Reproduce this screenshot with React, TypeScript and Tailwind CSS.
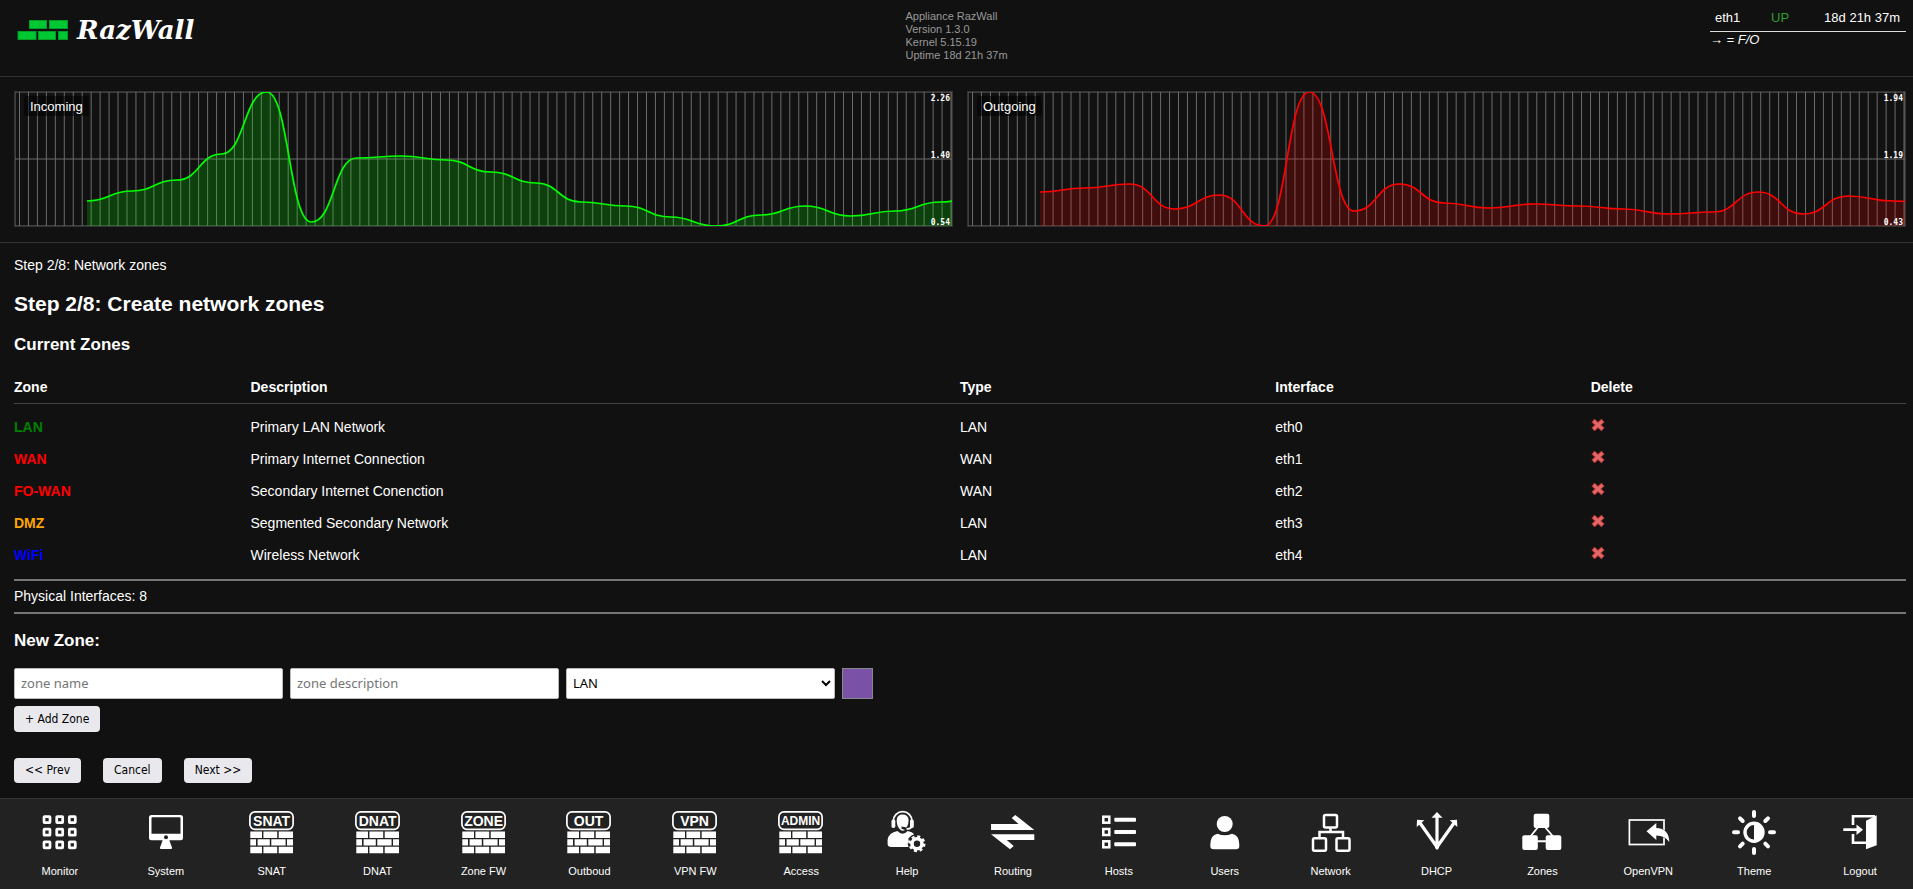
import React, { useState } from "react";

const INCOMING = [201, 191, 180, 154, 92, 222, 158, 156, 160, 172, 183, 202, 206, 217, 226, 215, 206, 216, 211, 202, 196];
const OUTGOING = [192, 188, 184, 209, 195, 226, 92, 211, 184, 203, 208, 204, 206, 209, 214, 212, 192, 214, 196, 201, 203];

const ZONES = [
  { name: "LAN", color: "text-[#008000]", description: "Primary LAN Network", type: "LAN", iface: "eth0" },
  { name: "WAN", color: "text-[#ff0000]", description: "Primary Internet Connection", type: "WAN", iface: "eth1" },
  { name: "FO-WAN", color: "text-[#ff0000]", description: "Secondary Internet Conenction", type: "WAN", iface: "eth2" },
  { name: "DMZ", color: "text-[#ffa500]", description: "Segmented Secondary Network", type: "LAN", iface: "eth3" },
  { name: "WiFi", color: "text-[#0000ff]", description: "Wireless Network", type: "LAN", iface: "eth4" },
];

// Horizontal-tangent bezier through evenly spaced samples
function smoothPath(values: number[]) {
  const step = 44.9;
  let d = `M72 ${values[0] - 92}`;
  for (let i = 1; i < values.length; i++) {
    const x0 = 72 + step * (i - 1);
    const x1 = x0 + step;
    const mid = (x0 + x1) / 2;
    d += ` C${mid} ${values[i - 1] - 92} ${mid} ${values[i] - 92} ${x1} ${values[i] - 92}`;
  }
  return d;
}

type TrafficChartProps = {
  title: string;
  values: number[];
  stroke: string;
  fill: string;
  scale: [string, string, string];
};

function TrafficChart({ title, values, stroke, fill, scale }: TrafficChartProps) {
  const line = smoothPath(values);
  const grid = Array.from({ length: 105 }, (_, i) => 4.5 + i * 8.957);

  return (
    <div className="relative h-[136px] flex-1 border border-[#333] overflow-hidden">
      <svg className="block w-full h-full" viewBox="0 0 937 134" preserveAspectRatio="none" aria-label={`${title} traffic`}>
        <g stroke="#6c6c6c" strokeWidth="1">
          {grid.map((x) => (
            <path key={x} d={`M${x} 0V134`} />
          ))}
          <path d="M0 0H937M0 67H937M0 134H937M0 0V134M937 0V134" />
        </g>
        <path d={`${line} V134 H72 Z`} fill={fill} />
        <path d={line} fill="none" stroke={stroke} strokeWidth="1.7" />
      </svg>
      <span className="absolute left-[9px] top-1 h-5 px-[6px] rounded-[3px] bg-black/50 text-[13px] leading-[22px] text-white">
        {title}
      </span>
      <div className="absolute right-0.5 inset-y-0 text-right font-['DejaVu_Sans_Mono',monospace] font-bold text-[8px] leading-3 text-white">
        <div className="absolute right-0 top-px">{scale[0]}</div>
        <div className="absolute right-0 bottom-16">{scale[1]}</div>
        <div className="absolute right-0 -bottom-[3px]">{scale[2]}</div>
      </div>
    </div>
  );
}

function Logo() {
  return (
    <a href="#" className="flex items-center gap-2 text-white w-max">
      <svg width="52" height="22" viewBox="0 0 52 22" fill="#00c832" stroke="#009a27" strokeWidth="1">
        <rect x="12.5" y="1.5" width="17" height="8" />
        <rect x="32.5" y="1.5" width="18" height="8" />
        <rect x="1" y="12.5" width="18" height="8" />
        <rect x="21.5" y="12.5" width="17" height="8" />
        <rect x="41.5" y="12.5" width="9" height="8" />
      </svg>
      <span className="font-['DejaVu_Serif',serif] font-bold italic text-[26px] leading-[26px]">RazWall</span>
    </a>
  );
}

function WallIcon({ label, size = 15 }: { label: string; size?: number }) {
  return (
    <>
      <rect x="1.9" y="3.9" width="43.2" height="17.4" rx="5" fill="none" stroke="currentColor" strokeWidth="1.7" />
      <text
        x="23.6"
        y={size === 12 ? 17 : 18}
        textAnchor="middle"
        fontFamily="Liberation Sans, sans-serif"
        fontWeight="bold"
        fontSize={size}
      >
        {label}
      </text>
      <path d="M2.3 23.5H14V30H2.3ZM15.4 23.5H29.2V30H15.4ZM30.7 23.5H45V30H30.7ZM2.3 31.2H8V37.6H2.3ZM9.6 31.2H21.8V37.6H9.6ZM23.3 31.2H37.6V37.6H23.3ZM39 31.2H45V37.6H39ZM2.3 38.8H14V45.3H2.3ZM15.4 38.8H29.2V45.3H15.4ZM30.7 38.8H45V45.3H30.7Z" />
    </>
  );
}

const MonitorIcon = (
  <g fill="none" stroke="currentColor" strokeWidth="2.7">
    {[11.2, 23.8, 36.4].map((y) =>
      [11, 23.7, 36.3].map((x) => <rect key={`${x}-${y}`} x={x - 3} y={y - 2.6} width="6" height="6" rx="0.5" />)
    )}
  </g>
);

const SystemIcon = (
  <>
    <path fillRule="evenodd" d="M9.5 7H38.5Q41 7 41 9.5V29.8Q41 32.3 38.5 32.3H9.5Q7 32.3 7 29.8V9.5Q7 7 9.5 7ZM10.5 9.2Q9.5 9.2 9.5 10.2V25.8H38.5V10.2Q38.5 9.2 37.5 9.2Z" />
    <path d="M21.5 30H26.5L30 39.5Q30.3 41 29 41H19Q17.7 41 18 39.5Z" />
    <circle cx="24" cy="29.3" r="2" fill="#222" />
  </>
);

const HelpIcon = (
  <>
    <path d="M10.3 15.5V13A9.3 9.3 0 0 1 29 13V15.5" fill="none" stroke="currentColor" strokeWidth="1.8" />
    <path d="M13.7 12Q14 6.5 19.6 6.5T25.6 12Q25.8 17 23.6 19.5L18.5 18.5V20.7L22 22Q19.6 23.7 17.4 21.8 13.6 18.5 13.7 12Z" />
    <rect x="8.5" y="11.5" width="3.8" height="8.5" rx="1.7" />
    <rect x="27" y="11.5" width="3.8" height="8.5" rx="1.7" />
    <path d="M29 18.5Q27.5 21 23.5 21" fill="none" stroke="currentColor" strokeWidth="1.6" />
    <path d="M14.5 23Q19.5 28.5 24.7 23Q29.5 24 31.2 26.2L28.5 27.6 25.3 30.5 26 34 24.6 35.5 25.5 39H8.5Q4.6 39 4.6 36V32Q5.5 24.5 14.5 23Z" />
    <circle cx="34" cy="35.7" r="5" fill="none" stroke="currentColor" strokeWidth="3.6" />
    <circle cx="34" cy="35.7" r="7.3" fill="none" stroke="currentColor" strokeWidth="2.4" strokeDasharray="3 2.733" />
  </>
);

const RoutingIcon = (
  <path d="M2 16H29.5L22.7 10 26.3 7 45.3 22H2ZM45.3 32H17.8L24.7 38 21 41.3 2 26.3H45.3Z" />
);

const HostsIcon = (
  <>
    {[11.7, 24, 36.3].map((y) => (
      <g key={y}>
        <rect x="8.3" y={y - 3} width="6" height="6" fill="none" stroke="currentColor" strokeWidth="2.5" />
        <rect x="19.3" y={y - 2} width="21.7" height="4" rx="1" />
      </g>
    ))}
  </>
);

const UsersIcon = (
  <>
    <circle cx="23.7" cy="16" r="8" />
    <path d="M16.5 25.7Q23.7 28.8 31 25.7Q38.3 27 38.3 36.5V38Q38.3 41.3 35 41.3H12.6Q9.3 41.3 9.3 38V36.5Q9.3 27 16.5 25.7Z" />
  </>
);

const NetworkIcon = (
  <g fill="none" stroke="currentColor" strokeWidth="2.5">
    <rect x="17" y="7" width="13" height="12.5" rx="1.5" />
    <rect x="6" y="30.3" width="13" height="12.5" rx="1.5" />
    <rect x="29.5" y="30.3" width="13" height="12.5" rx="1.5" />
    <path d="M23.5 19.5V24M12.5 30V24H36V30" />
  </g>
);

const DhcpIcon = (
  <>
    <path d="M24 38V8M24 39L7 15M24 39L41 15" fill="none" stroke="currentColor" strokeWidth="3.2" />
    <path d="M24 4L29.5 9.8H18.5ZM4 11.7L11.3 12.3 3.7 19ZM44 11.7L36.7 12.3 44.3 19ZM22 35H26V40L24 42 22 40Z" />
  </>
);

const ZonesIcon = (
  <>
    <rect x="15.7" y="5.7" width="15.6" height="14.3" rx="2" />
    <rect x="4.3" y="27.3" width="15.5" height="14.7" rx="2" />
    <rect x="27.7" y="27.3" width="15.6" height="14.7" rx="2" />
    <path d="M20.5 18.5L12 29M26.5 18.5L35.5 29M19 33.2H28" stroke="currentColor" strokeWidth="1.9" />
  </>
);

const OpenVpnIcon = (
  <>
    <rect x="5.4" y="12" width="34.6" height="24.5" fill="none" stroke="currentColor" strokeWidth="1.7" />
    <path
      d="M22.5 23.3L32.3 15V20Q45 20.5 45.3 34Q41 27.5 32.3 27.5V32Z"
      stroke="#222"
      strokeWidth="1"
      paintOrder="stroke"
    />
  </>
);

const ThemeIcon = (
  <>
    <circle cx="24" cy="24.3" r="9" fill="none" stroke="currentColor" strokeWidth="3.4" />
    <path d="M24 16A8.3 8.3 0 0 1 24 32.6Z" />
    <path
      d="M24 4V8M24 41V45M4 24.3H8M40 24.3H44M10 10.3L12.7 13M35.3 35.6L38 38.3M38 10.3L35.3 13M12.7 35.6L10 38.3"
      stroke="currentColor"
      strokeWidth="4"
      strokeLinecap="round"
    />
  </>
);

const LogoutIcon = (
  <>
    <path d="M17 17V8.3H39M17 26V34.8H31" fill="none" stroke="currentColor" strokeWidth="2.6" />
    <path d="M30 12.7L40.7 7.3V37.3L30 41.3Z" />
    <path d="M7.3 20.3H20.5V16.5L27 21.7 20.5 27V23H7.3Z" />
  </>
);

const NAV = [
  { label: "Monitor", icon: MonitorIcon },
  { label: "System", icon: SystemIcon },
  { label: "SNAT", icon: <WallIcon label="SNAT" size={14} /> },
  { label: "DNAT", icon: <WallIcon label="DNAT" size={14} /> },
  { label: "Zone FW", icon: <WallIcon label="ZONE" size={14} /> },
  { label: "Outboud", icon: <WallIcon label="OUT" size={14} /> },
  { label: "VPN FW", icon: <WallIcon label="VPN" size={14} /> },
  { label: "Access", icon: <WallIcon label="ADMIN" size={12} /> },
  { label: "Help", icon: HelpIcon },
  { label: "Routing", icon: RoutingIcon },
  { label: "Hosts", icon: HostsIcon },
  { label: "Users", icon: UsersIcon },
  { label: "Network", icon: NetworkIcon },
  { label: "DHCP", icon: DhcpIcon },
  { label: "Zones", icon: ZonesIcon },
  { label: "OpenVPN", icon: OpenVpnIcon },
  { label: "Theme", icon: ThemeIcon },
  { label: "Logout", icon: LogoutIcon },
];

function DeleteIcon() {
  return (
    <svg width="14" height="14" viewBox="0 0 14 14" fill="none">
      <path d="M2 2.5L12 11.5M12 2.5L2 11.5" stroke="#c43c3c" strokeWidth="4.6" />
      <path d="M2.6 3L11.4 11M11.4 3L2.6 11" stroke="#e46a6a" strokeWidth="2.6" />
    </svg>
  );
}

const fieldClass =
  "w-[269px] h-[31px] px-1.5 bg-white border border-[#bbb] rounded-[2px] font-['Noto_Sans',sans-serif] text-[13px] text-black placeholder:text-[#757575]";
const buttonClass =
  "px-[11px] bg-[#e9e9ed] rounded-[4px] font-['DejaVu_Sans_Condensed','Noto_Sans',sans-serif] text-[12px] leading-4 text-black hover:bg-[#d0d0d7] cursor-pointer";

export default function App() {
  const [color, setColor] = useState("#7952a8");

  return (
    <div className="min-h-screen flex flex-col bg-[#111] text-white font-['Liberation_Sans',Arial,sans-serif] text-[14px] leading-5">
      <header className="grid grid-cols-[1fr_auto_1fr] h-[77px] border-b border-[#333]">
        <div className="pl-[17px] pt-[17px]">
          <Logo />
        </div>
        <div className="pt-2.5 text-[11px] leading-[13px] text-[#999]">
          <p>Appliance RazWall</p>
          <p>Version 1.3.0</p>
          <p>Kernel 5.15.19</p>
          <p>Uptime 18d 21h 37m</p>
        </div>
        <div className="justify-self-end pr-[7px] pt-[5px] text-[13px] leading-4">
          <table className="w-[196px]">
            <tbody>
              <tr className="h-[26px] border-b border-[#ddd]">
                <td className="w-[61px] pl-[5px]">eth1</td>
                <td className="text-[#2e9e2e]">UP</td>
                <td className="pr-1.5 text-right whitespace-nowrap">18d 21h 37m</td>
              </tr>
            </tbody>
          </table>
          <p className="italic">→ = F/O</p>
        </div>
      </header>

      <section className="flex gap-3.5 pl-3.5 pr-[7px] pt-3.5 pb-[15px] border-b border-[#333]">
        <TrafficChart title="Incoming" values={INCOMING} stroke="#00ff00" fill="rgba(0,255,0,0.2)" scale={["2.26", "1.40", "0.54"]} />
        <TrafficChart title="Outgoing" values={OUTGOING} stroke="#ff0000" fill="rgba(255,0,0,0.2)" scale={["1.94", "1.19", "0.43"]} />
      </section>

      <main className="pl-3.5 pr-[7px] pt-3 pb-[15px]">
        <p>Step 2/8: Network zones</p>
        <h2 className="mt-[15px] text-[21px] leading-7 font-bold">Step 2/8: Create network zones</h2>
        <h3 className="mt-[17px] text-[17px] leading-5 font-bold">Current Zones</h3>

        <table className="mt-4 w-full table-fixed text-left">
          <thead>
            <tr className="h-8 border-b border-[#444]">
              <th className="w-[12.5%]">Zone</th>
              <th className="w-[37.5%]">Description</th>
              <th>Type</th>
              <th>Interface</th>
              <th>Delete</th>
            </tr>
          </thead>
          <tbody className="leading-8 [&>tr:first-child>td]:pt-[7px]">
            {ZONES.map((zone) => (
              <tr key={zone.name}>
                <td className={`font-bold ${zone.color}`}>{zone.name}</td>
                <td>{zone.description}</td>
                <td>{zone.type}</td>
                <td>{zone.iface}</td>
                <td className="pb-1">
                  <button type="button" aria-label={`Delete ${zone.name}`} className="flex items-center h-7 cursor-pointer">
                    <DeleteIcon />
                  </button>
                </td>
              </tr>
            ))}
          </tbody>
        </table>

        <p className="mt-2 pt-[5px] pb-1.5 border-t-2 border-b-2 border-[#777]">Physical Interfaces: 8</p>

        <h3 className="mt-[17px] text-[17px] leading-5 font-bold">New Zone:</h3>
        <form className="mt-[17px]" onSubmit={(e) => e.preventDefault()}>
          <div className="flex flex-wrap gap-[7px]">
            <input type="text" aria-label="zone name" placeholder="zone name" className={fieldClass} />
            <input type="text" aria-label="zone description" placeholder="zone description" className={fieldClass} />
            <select aria-label="zone type" className={`${fieldClass} pl-0.5 pr-0`}>
              <option>LAN</option>
              <option>WAN</option>
            </select>
            <input
              type="color"
              aria-label="zone color"
              value={color}
              onChange={(e) => setColor(e.target.value)}
              className="w-[31px] h-[31px] p-0 border border-[#888] [&::-webkit-color-swatch-wrapper]:p-0 [&::-webkit-color-swatch]:border-0"
            />
          </div>
          <button type="submit" className={`mt-[7px] h-[26px] ${buttonClass}`}>+ Add Zone</button>
        </form>

        <div className="mt-[26px] flex gap-[22px]">
          <button type="button" className={`h-[25px] ${buttonClass}`}>&lt;&lt; Prev</button>
          <button type="button" className={`h-[25px] ${buttonClass}`}>Cancel</button>
          <button type="button" className={`h-[25px] ${buttonClass}`}>Next &gt;&gt;</button>
        </div>
      </main>

      <nav className="mt-auto flex pl-[7px] pt-[9px] pb-[11px] bg-[#222] border-t border-[#333]">
        {NAV.map((item) => (
          <a key={item.label} href="#" className="flex-1 flex flex-col items-center gap-2 text-[11px] leading-[14px] text-white">
            <svg width="48" height="48" viewBox="0 0 48 48" fill="currentColor">
              {item.icon}
            </svg>
            {item.label}
          </a>
        ))}
      </nav>
    </div>
  );
}
